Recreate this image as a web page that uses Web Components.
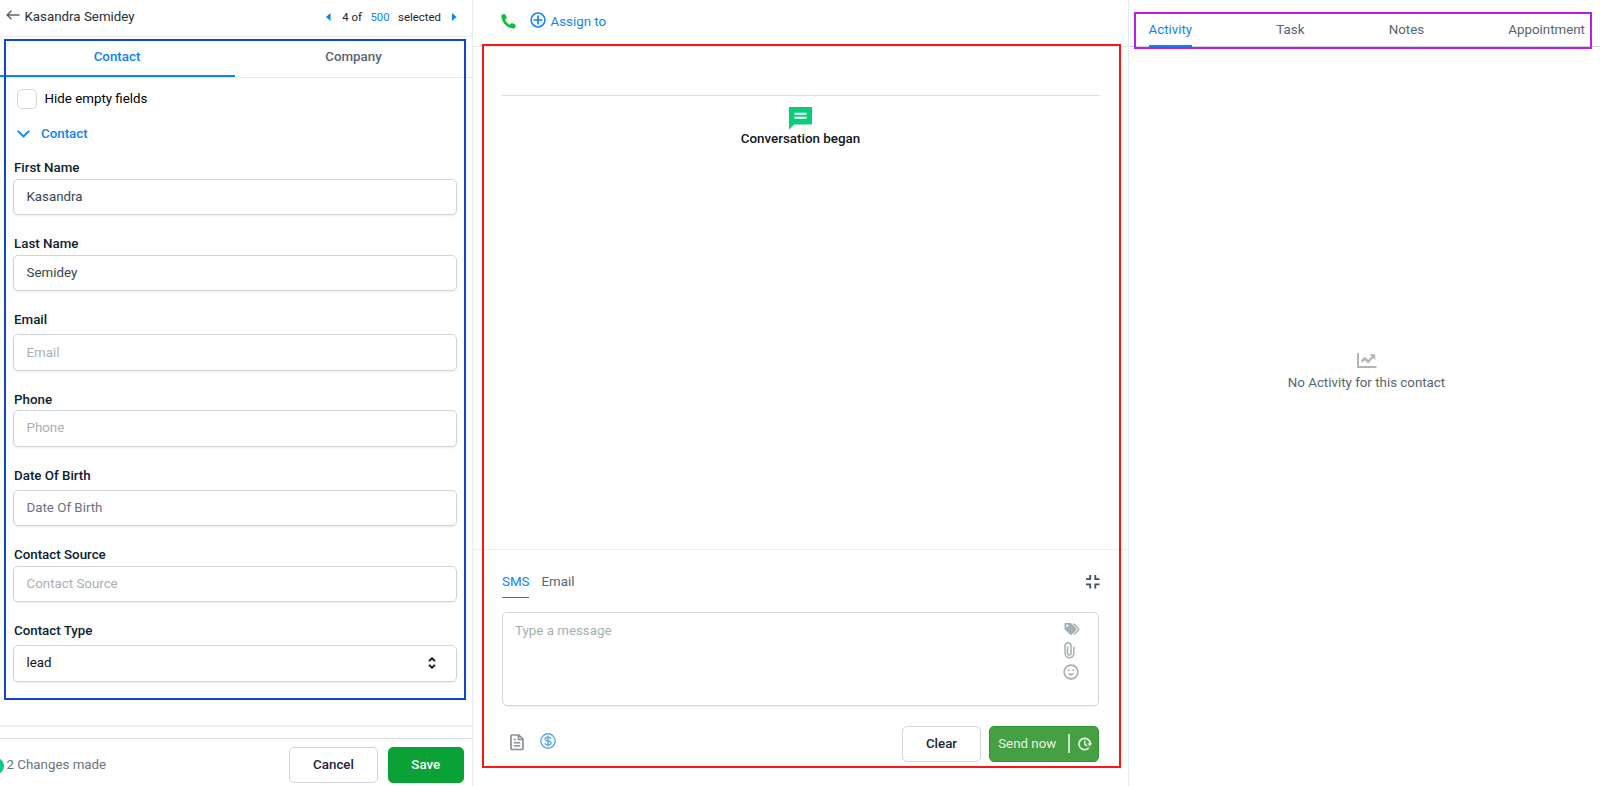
<!DOCTYPE html>
<html lang="en">
<head>
<meta charset="utf-8">
<title>Contact details</title>
<style>
    body {
        margin: 0;
        width: 1600px;
        height: 786px;
        overflow: hidden;
        background: white;
        font-family: Roboto, "Liberation Sans", sans-serif;
        font-size: 13.33px;
        line-height: 16px;
        color: #10202b;
    }
</style>
</head>
<body>
<crm-page>
    <contact-panel name="Kasandra Semidey">
        <form-field label="First Name" value="Kasandra"></form-field>
        <form-field label="Last Name" value="Semidey"></form-field>
        <form-field label="Email" placeholder="Email" spaced></form-field>
        <form-field label="Phone" placeholder="Phone"></form-field>
        <form-field label="Date Of Birth" placeholder="Date Of Birth" spaced dark></form-field>
        <form-field label="Contact Source" placeholder="Contact Source"></form-field>
        <form-field label="Contact Type" value="lead" spaced select></form-field>
    </contact-panel>
    <conversation-panel></conversation-panel>
    <activity-panel>No Activity for this contact</activity-panel>
</crm-page>

<script>
const ICONS = {
    "back": `<path d="M13.5 6H1.5M5.5 1.8 1.2 6l4.3 4.2" fill="none" stroke="currentColor" stroke-width="1.5"/>`,
    "prev": `<path d="M4.5 0v8L0 4z" fill="currentColor"/>`,
    "next": `<path d="M0 0v8l4.5-4z" fill="currentColor"/>`,
    "chevron": `<path d="M.8.8 6.5 6.4 12.2.8" fill="none" stroke="currentColor" stroke-width="1.8"/>`,
    "updown": `<path d="M1 4.2 4 1.3l3 2.9M1 7.8l3 2.9 3-2.9" fill="none" stroke="currentColor" stroke-width="1.8"/>`,
    "phone": `<path d="M3.6 3 6.5 2.3c.4 0 .7 0 .9.4l1.8 4c.1.4 0 .7-.2.9L7 9.3c1.4 3.3 3.700 5.900 6.900 7.400l1.700-2.100c.2-.3.600-.3.900-.2l4.200 1.800c.300.2.500.5.400.8l-.700 3c-.1.400-.400.600-.800.600C10.500 20.600 3 13.300 3 3.700c0-.4.200-.6.600-.7z" fill="currentColor" stroke="currentColor"/>`,
    "plus": `<circle cx="8" cy="8" r="6.900" fill="none" stroke="currentColor" stroke-width="1.500"/><path d="M8 3.500v9M3.500 8h9" stroke="currentColor" stroke-width="1.700"/>`,
    "message": `<path d="M0 0h23v17.500H5.300L0 22.500z" fill="currentColor"/><path d="M5.500 6.800h12M5.500 10.800h12" stroke="white" stroke-width="1.900"/>`,
    "compress": `<path d="M0 4.200h4.200V0M9.300 0v4.200h4.200M13.500 9.300H9.300v4.200M4.200 13.500V9.300H0" fill="none" stroke="currentColor" stroke-width="1.800"/>`,
    "tags": `<path d="M1.500 1h4.800c.5 0 .9.200 1.200.500l4.700 4.700c.6.600.6 1.500 0 2.100l-4.300 4.300c-.6.600-1.500.6-2.100 0L1 7.800C.7 7.500.5 7 .5 6.600V2c0-.6.400-1 1-1zM3.200 2.600a1.100 1.100 0 1 0 0 2.200 1.100 1.100 0 0 0 0-2.200z" fill="currentColor" fill-rule="evenodd"/><path d="m9.400 1.500 5 5c.500.500.500 1 0 1.500l-4.200 4.500" fill="none" stroke="currentColor" stroke-width="1.300"/>`,
    "clip": `<path d="M7.300 4.500v6.800a1.750 1.750 0 0 1-3.500 0V3.800a2.900 2.900 0 0 1 6 0v7.400a4.400 4.400 0 0 1-8.900 0V4.500" transform="matrix(-1 0 0 1 10.800 0)" fill="none" stroke="currentColor" stroke-width="1.500"/>`,
    "smile": `<circle cx="8" cy="8" r="6.900" fill="none" stroke="currentColor" stroke-width="1.600"/><circle cx="5.700" cy="6.300" r="1" fill="currentColor"/><circle cx="10.300" cy="6.300" r="1" fill="currentColor"/><path d="M4.800 9.600c1.300 2.500 5.100 2.500 6.400 0z" fill="currentColor"/>`,
    "document": `<path d="M2.500 1h6.300L13 5.200v9.300a1 1 0 0 1-1 1H2a1 1 0 0 1-1-1V2a1 1 0 0 1 1-1zM8.500 1v4.500H13" fill="none" stroke="currentColor" stroke-width="1.700"/><path d="M3.800 5.500h2M3.800 8.700h6.400M3.800 11.800h6.400" stroke="currentColor" stroke-width="1.500"/>`,
    "dollar": `<circle cx="8" cy="8" r="7.200" fill="none" stroke="currentColor" stroke-width="1.400"/><path d="M8 2.800v10.400M10.900 5.800c-.3-1.100-1.300-1.600-2.900-1.600-1.800 0-2.900.7-2.900 1.900 0 2.700 5.900 1.100 5.900 3.900 0 1.200-1.200 1.900-3 1.900-1.700 0-2.800-.6-3.100-1.800" fill="none" stroke="currentColor" stroke-width="1.400"/>`,
    "schedule": `<path d="M10.800 10.900A5.700 5.700 0 1 1 12.300 6.500" fill="none" stroke="currentColor" stroke-width="1.700"/><path d="M6.800 3.500v3.800l2.500 1.500" fill="none" stroke="currentColor" stroke-width="1.500"/><path d="M9.300 6.300h4.900l-2.500 3.200z" fill="currentColor"/>`,
    "chart": `<path d="M1 0v14h18.500" fill="none" stroke="currentColor" stroke-width="2"/><path d="m4.500 8.500 3.200-3 3.500 3.200 4.600-5" fill="none" stroke="currentColor" stroke-width="2.400"/><path d="M12.500 1.300h5.700V7z" fill="currentColor"/>`
};

/* Attributes: name, width, height, box (optional viewBox) */
window.customElements.define("app-icon", class extends HTMLElement {
    connectedCallback() {
        const w = this.getAttribute("width");
        const h = this.getAttribute("height");
        const box = this.getAttribute("box") || `0 0 ${w} ${h}`;
        this.attachShadow({ mode: "open" }).innerHTML = `
            <style>
                :host { display: block; flex: none; width: ${w}px; height: ${h}px; }
                svg { display: block; overflow: visible; }
            </style>
            <svg width="${w}" height="${h}" viewBox="${box}">${ICONS[this.getAttribute("name")]}</svg>
        `;
    }
});

// coloured frame laid over a part of a panel
window.customElements.define("mark-frame", class extends HTMLElement {
    constructor() {
        super();
        this.attachShadow({ mode: "open" }).innerHTML = `
            <style>
                :host {
                    display: block;
                    position: absolute;
                    box-sizing: border-box;
                    border: 2px solid var(--frame);
                    pointer-events: none;
                }
            </style>
        `;
    }
});

window.customElements.define("crm-page", class extends HTMLElement {
    constructor() {
        super();
        this.attachShadow({ mode: "open" }).innerHTML = `
            <style>
                :host {
                    display: grid;
                    grid-template-columns: 473px 656px 471px;
                    height: 786px;
                }
            </style>
            <slot></slot>
        `;
    }
});

/* Attributes: label, value, placeholder, spaced, dark, select */
window.customElements.define("form-field", class extends HTMLElement {
    connectedCallback() {
        const value = this.getAttribute("value");
        this.attachShadow({ mode: "open" }).innerHTML = `
            <style>
                :host { display: block; margin-bottom: 20.9px; }
                label { display: block; font-weight: 500; padding-left: 1px; margin-bottom: 2.7px; color: #0d2230; }
                :host([spaced]) label { margin-bottom: 6.2px; }
                .input {
                    display: flex;
                    align-items: center;
                    justify-content: space-between;
                    box-sizing: border-box;
                    height: 36.4px;
                    padding: 0 20px 0 12.5px;
                    border: 1px solid #d0d4dc;
                    border-radius: 5px;
                    box-shadow: 0 1px 2px rgba(16, 24, 40, .09);
                    color: #3a4350;
                }
                .placeholder { color: #a7b1b5; }
                :host([dark]) .placeholder { color: #6b7280; }
                :host([select]) .input { color: #10161c; }
            </style>
            <label>${this.getAttribute("label")}</label>
            <div class="input">
                <span class="${value ? "" : "placeholder"}">${value || this.getAttribute("placeholder")}</span>
                ${this.hasAttribute("select") ? `<app-icon name="updown" width="8" height="12"></app-icon>` : ""}
            </div>
        `;
    }
});

window.customElements.define("action-button", class extends HTMLElement {
    constructor() {
        super();
        this.attachShadow({ mode: "open" }).innerHTML = `
            <style>
                :host {
                    display: flex;
                    align-items: center;
                    justify-content: center;
                    box-sizing: border-box;
                    height: 36.5px;
                    border: 1px solid #d0d4dc;
                    border-radius: 5px;
                    font-weight: 500;
                    color: #1b2636;
                    background: white;
                }
                :host([primary]) { background: #0aa136; border-color: #0aa136; color: white; }
                :host([send]) { background: #469f42; border-color: #2c9a2b; color: #e4f4e3; font-weight: 400; }
            </style>
            <slot></slot>
        `;
    }
});

window.customElements.define("contact-panel", class extends HTMLElement {
    connectedCallback() {
        this.attachShadow({ mode: "open" }).innerHTML = `
            <style>
                :host {
                    display: flex;
                    flex-direction: column;
                    position: relative;
                    box-sizing: border-box;
                    border-right: 1px solid #e8eff4;
                }
                header {
                    display: flex;
                    align-items: center;
                    box-sizing: border-box;
                    height: 37px;
                    padding: 0 15px 3px 6px;
                    border-bottom: 1px solid #eeeff1;
                }
                .name { flex: 1; padding-left: 4.5px; color: #252f37; }
                .back { color: #55666d; padding-bottom: 3px; }
                .pager { display: flex; align-items: center; font-size: 11.4px; color: #1c2329; }
                .blue { color: #0a84f5; }
                .tabs { display: flex; height: 41px; box-sizing: border-box; border-bottom: 1px solid #e2e5e9; }
                .tab { flex: 1; text-align: center; font-weight: 500; padding-top: 12px; color: #5c6473; }
                .tab.active { flex: 0 0 235px; height: 26px; color: #0a84f5; border-bottom: 2px solid #0a84f5; }
                .active span { margin-right: 1px; }
                .check { display: flex; align-items: center; gap: 7.5px; padding: 10.5px 0 0 17px; color: black; }
                .box { width: 18px; height: 18px; border: 1px solid #d3d5da; border-radius: 5px; }
                .section { display: flex; align-items: center; gap: 11.5px; padding: 17.5px 0 0 16.5px; font-weight: 500; }
                .fields { padding: 18.2px 15.5px 0 13px; flex: 1; }
                .gap { height: 10.7px; border-top: 2px solid #eeeeee; }
                footer {
                    display: flex;
                    align-items: center;
                    box-sizing: border-box;
                    height: 48px;
                    padding: 5px 8px 0 0;
                    border-top: 1px solid #d8dae2;
                }
                .dot { width: 4px; height: 16px; overflow: hidden; margin-top: 2px; }
                .dot::before { content: ""; display: block; width: 16px; height: 16px; margin-left: -12px; border-radius: 50%; background: #06c98c; }
                .changes { flex: 1; padding-left: 2.5px; color: #6b757b; }
                .cancel { width: 89px; margin-right: 9.5px; }
                .save { width: 76.5px; }
                mark-frame { --frame: #0f45d0; left: 4px; top: 39px; width: 462px; height: 661px; }
            </style>
            <header>
                <app-icon class="back" name="back" width="14" height="12"></app-icon>
                <span class="name">${this.getAttribute("name")}</span>
                <span class="pager">
                    <app-icon class="blue" name="prev" width="5" height="8"></app-icon>
                    <span style="padding: 0 8.5px 0 11px">4 of</span>
                    <span class="blue">500</span>
                    <span style="padding: 0 11px 0 8.5px">selected</span>
                    <app-icon class="blue" name="next" width="5" height="8"></app-icon>
                </span>
            </header>
            <div class="tabs">
                <div class="tab active"><span>Contact</span></div>
                <div class="tab">Company</div>
            </div>
            <div class="check"><div class="box"></div>Hide empty fields</div>
            <div class="section blue"><app-icon name="chevron" width="13" height="8"></app-icon>Contact</div>
            <div class="fields"><slot></slot></div>
            <div class="gap"></div>
            <footer>
                <div class="dot"></div>
                <span class="changes">2 Changes made</span>
                <action-button class="cancel">Cancel</action-button>
                <action-button class="save" primary>Save</action-button>
            </footer>
            <mark-frame></mark-frame>
        `;
    }
});

window.customElements.define("conversation-panel", class extends HTMLElement {
    constructor() {
        super();
        this.attachShadow({ mode: "open" }).innerHTML = `
            <style>
                :host {
                    display: flex;
                    flex-direction: column;
                    position: relative;
                    box-sizing: border-box;
                    border-right: 1px solid #e4edf3;
                }
                header {
                    display: flex;
                    align-items: center;
                    box-sizing: border-box;
                    height: 47px;
                    padding: 0 0 3px 28px;
                    border-bottom: 1px solid #e4eaee;
                    color: #1285f2;
                }
                .phone { color: #08bd3c; margin-right: 14px; }
                .plus { margin: 0 4.5px 3px 0; }
                .thread {
                    display: flex;
                    flex-direction: column;
                    align-items: center;
                    margin: 48px 28.5px 0 28.5px;
                    padding-top: 11px;
                    border-top: 1px solid #dcdddf;
                    height: 441.5px;
                    color: #10171c;
                }
                .thread span { font-weight: 500; font-size: 13.4px; margin-top: 1.5px; }
                .thread app-icon { color: #08cd79; }
                .composer { border-top: 1px solid #e8f0f3; padding: 24px 29px 0 29px; }
                .modes { display: flex; align-items: flex-start; height: 38.5px; color: #57666d; }
                .sms { color: #0a84f5; border-bottom: 1px solid #0a84f5; height: 23px; margin-right: 12px; }
                .modes app-icon { margin: 1px 0 0 auto; color: #3d535c; }
                .message {
                    display: flex;
                    justify-content: space-between;
                    box-sizing: border-box;
                    height: 94px;
                    padding: 9.5px 18px 0 12px;
                    border: 1px solid #d2d7de;
                    border-radius: 5px;
                    box-shadow: 0 1px 1px rgba(16, 24, 40, .05);
                    color: #a4afb3;
                }
                .tools { display: flex; flex-direction: column; align-items: flex-start; gap: 6px; margin-top: -1px; }
                .actions { display: flex; align-items: center; margin-top: 19.5px; }
                .doc { margin: 0 0 4px 8px; color: #879297; }
                .pay { margin: 0 auto 5px 15.5px; color: #58a8ef; }
                .clear { width: 79px; margin-right: 8px; }
                .send { width: 110px; }
                .bar { width: 1.5px; height: 19px; margin: 0 8px 0 12px; background: #c8e4c7; }
                .send app-icon { margin-right: -2px; }
                mark-frame { --frame: #fb1515; left: 9px; top: 44px; width: 639px; height: 724px; }
            </style>
            <header>
                <app-icon class="phone" name="phone" width="15" height="15" box="2.5 1.8 19 20"></app-icon>
                <app-icon class="plus" name="plus" width="16" height="16"></app-icon>
                <span>Assign to</span>
            </header>
            <div class="thread">
                <app-icon name="message" width="23" height="22"></app-icon>
                <span>Conversation began</span>
            </div>
            <div class="composer">
                <div class="modes">
                    <span class="sms">SMS</span>
                    <span>Email</span>
                    <app-icon name="compress" width="13.5" height="13.5"></app-icon>
                </div>
                <div class="message">
                    <span>Type a message</span>
                    <div class="tools">
                        <app-icon name="tags" style="margin-left: 1.5px" width="16" height="14"></app-icon>
                        <app-icon name="clip" style="margin-left: 1.5px" width="11" height="16"></app-icon>
                        <app-icon name="smile" width="16" height="16"></app-icon>
                    </div>
                </div>
                <div class="actions">
                    <app-icon class="doc" name="document" width="14" height="16"></app-icon>
                    <app-icon class="pay" name="dollar" width="16" height="16"></app-icon>
                    <action-button class="clear">Clear</action-button>
                    <action-button class="send" send>
                        Send now
                        <div class="bar"></div>
                        <app-icon name="schedule" width="14" height="14"></app-icon>
                    </action-button>
                </div>
            </div>
            <mark-frame></mark-frame>
        `;
    }
});

window.customElements.define("activity-panel", class extends HTMLElement {
    constructor() {
        super();
        this.attachShadow({ mode: "open" }).innerHTML = `
            <style>
                :host { display: block; position: relative; color: #55666e; }
                nav {
                    display: flex;
                    justify-content: space-between;
                    box-sizing: border-box;
                    height: 47px;
                    padding: 22px 15px 0 19.5px;
                    border-bottom: 1px solid #ccd3dc;
                }
                .active { color: #0a84f5; height: 23px; border-bottom: 2px solid #0a84f5; }
                .empty {
                    display: flex;
                    flex-direction: column;
                    align-items: center;
                    gap: 7px;
                    padding: 306px 0 0 4px;
                }
                app-icon { color: #b4b5b7; }
                mark-frame { --frame: #b421e4; left: 5px; top: 12px; width: 458px; height: 37px; }
            </style>
            <nav>
                <span class="active">Activity</span>
                <span>Task</span>
                <span>Notes</span>
                <span>Appointment</span>
            </nav>
            <div class="empty">
                <app-icon name="chart" width="19.5" height="15"></app-icon>
                <span><slot></slot></span>
            </div>
            <mark-frame></mark-frame>
        `;
    }
});
</script>
</body>
</html>
